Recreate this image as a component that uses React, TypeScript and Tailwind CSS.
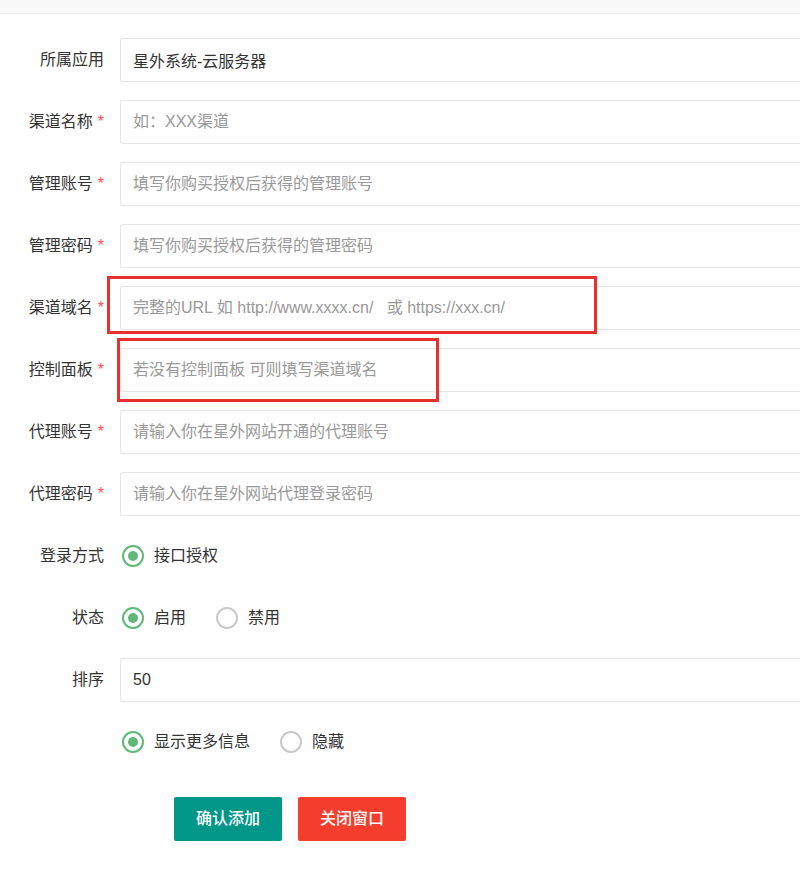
import React from 'react';

const font = { fontFamily: '"Liberation Sans", "Noto Sans CJK SC", sans-serif' };

interface FieldProps {
  label: string;
  required?: boolean;
  value?: string;
  placeholder?: string;
}

function Label({ label, required }: { label: string; required?: boolean }) {
  return (
    <div className="w-[120px] shrink-0 pr-[16px] text-right text-[16px] text-[#333]">
      {label}
      {required && <span className="ml-[5px] text-[#ff4d4f]">*</span>}
    </div>
  );
}

function Field({ label, required, value, placeholder }: FieldProps) {
  return (
    <div className="flex h-[44px] items-center">
      <Label label={label} required={required} />
      <input
        readOnly
        defaultValue={value}
        placeholder={placeholder}
        className="h-[44px] w-[700px] shrink-0 rounded-[2px] border border-[#e6e6e6] bg-white pl-3 text-[16px] text-[#333] outline-none placeholder:text-[#999]"
        style={font}
      />
    </div>
  );
}

function Radio({ checked, text }: { checked?: boolean; text: string }) {
  return (
    <div className="mr-[30px] flex items-center">
      <span
        className={`mr-[10px] flex h-[22px] w-[22px] items-center justify-center rounded-full border-2 ${
          checked ? 'border-[#5fb878]' : 'border-[#c9c9c9]'
        }`}
      >
        {checked && <span className="h-[10px] w-[10px] rounded-full bg-[#5fb878]" />}
      </span>
      <span className="text-[16px] text-[#333]">{text}</span>
    </div>
  );
}

function RadioRow({ label, items }: { label: string; items: { text: string; checked?: boolean }[] }) {
  return (
    <div className="flex h-[44px] items-center">
      <Label label={label} />
      <div className="flex items-center pl-[2px]">
        {items.map((it) => (
          <Radio key={it.text} text={it.text} checked={it.checked} />
        ))}
      </div>
    </div>
  );
}

export default function App() {
  return (
    <div className="relative h-[877px] w-[800px] overflow-hidden bg-white" style={font}>
      <div className="h-[14px] border-b border-[#eeeeee] bg-[#f8f8f8]" />

      <div className="flex flex-col gap-[18px] pt-[24px]">
        <Field label="所属应用" value="星外系统-云服务器" />
        <Field label="渠道名称" required placeholder="如：XXX渠道" />
        <Field label="管理账号" required placeholder="填写你购买授权后获得的管理账号" />
        <Field label="管理密码" required placeholder="填写你购买授权后获得的管理密码" />
        <Field label="渠道域名" required placeholder="完整的URL 如 http://www.xxxx.cn/   或 https://xxx.cn/" />
        <Field label="控制面板" required placeholder="若没有控制面板 可则填写渠道域名" />
        <Field label="代理账号" required placeholder="请输入你在星外网站开通的代理账号" />
        <Field label="代理密码" required placeholder="请输入你在星外网站代理登录密码" />
        <RadioRow label="登录方式" items={[{ text: '接口授权', checked: true }]} />
        <RadioRow label="状态" items={[{ text: '启用', checked: true }, { text: '禁用' }]} />
        <Field label="排序" value="50" />
        <RadioRow label="" items={[{ text: '显示更多信息', checked: true }, { text: '隐藏' }]} />
        <div className="mt-[15px] flex gap-4 pl-[174px]">
          <button className="h-[44px] w-[108px] rounded-[2px] bg-[#009688] text-[16px] font-medium text-white">确认添加</button>
          <button className="h-[44px] w-[108px] rounded-[2px] bg-[#f53d2d] text-[16px] font-medium text-white">关闭窗口</button>
        </div>
      </div>

      {/* annotation boxes */}
      <div className="absolute left-[107px] top-[276px] h-[58px] w-[490px] border-[3px] border-[#e8302e]" />
      <div className="absolute left-[117px] top-[338px] h-[64px] w-[322px] border-[3px] border-[#e8302e]" />
    </div>
  );
}
